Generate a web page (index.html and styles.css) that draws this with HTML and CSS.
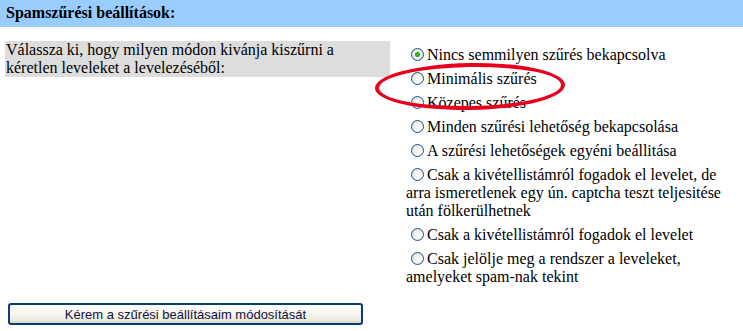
FILE: index.html
```html
<!DOCTYPE html>
<html>
<head>
    <meta charset="UTF-8">
    <title>Spamszures beallitasok</title>
    <link rel="stylesheet" href="styles.css">
</head>
<body>

    <!-- Spam filter settings -->
    <p class="section-title">Spamszűrési beállítások:</p>

    <form class="filter-form">
        <div class="settings-row">
            <p class="question">Válassza ki, hogy milyen módon kivánja kiszűrni a kéretlen leveleket a levelezéséből:</p>
            <div class="choices">
                <p class="choice"><input type="radio" name="level" value="0" checked>Nincs semmilyen szűrés bekapcsolva</p>
                <p class="choice"><input type="radio" name="level" value="1">Minimális szűrés</p>
                <p class="choice"><input type="radio" name="level" value="2">Közepes szűrés</p>
                <p class="choice"><input type="radio" name="level" value="3">Minden szűrési lehetőség bekapcsolása</p>
                <p class="choice"><input type="radio" name="level" value="4">A szűrési lehetőségek egyéni beállitása</p>
                <p class="choice"><input type="radio" name="level" value="5">Csak a kivétellistámról fogadok el levelet, de arra ismeretlenek egy ún. captcha teszt teljesitése után fölkerülhetnek</p>
                <p class="choice"><input type="radio" name="level" value="6">Csak a kivétellistámról fogadok el levelet</p>
                <p class="choice"><input type="radio" name="level" value="7">Csak jelölje meg a rendszer a leveleket, amelyeket spam-nak tekint</p>
            </div>
        </div>
        <button type="submit" class="xp-btn">Kérem a szűrési beállításaim módosítását</button>
    </form>

    <span class="highlight"></span>

</body>
</html>
```

FILE: styles.css
```css
body { margin: 0; padding: 0; background: #fff; }
p { margin: 0; }
.section-title { font-family: "Liberation Serif"; font-size: 16px; font-weight: bold; line-height: 18px; padding: 4px 6px 5px; background-color: #99ccff; color: #000; }
.settings-row { display: flex; align-items: flex-start; margin-top: 14px; }
.question { font-family: "Liberation Serif"; font-size: 16px; width: 383px; margin-left: 5px; padding: 0 1px; line-height: 18px; background-color: #dddddd; }
.choices { flex: 1; display: flex; flex-direction: column; gap: 6px; margin: 5px 5px 0 16px; }
.choice { font-family: "Liberation Serif"; font-size: 16px; }
.choice input[type="radio"] { appearance: none; -webkit-appearance: none; width: 13px; height: 13px; margin: 0 3px 0 5px; vertical-align: -1px; border: 1px solid #1c5180; border-radius: 50%; background: radial-gradient(circle at 65% 65%, #ffffff 0%, #f2f2ee 45%, #d4d2c8 100%); box-sizing: border-box; }
.choice input[type="radio"]:checked { background: radial-gradient(circle, #3fc33f 0, #21a121 2px, #e8f0e0 3px, #f2f2ee 45%, #d4d2c8 100%); }
.xp-btn { display: block; width: 355px; height: 22px; margin: 17px 0 0 8px; padding: 0; font-family: "Liberation Sans"; font-size: 13px; color: #10103a; border: 2px solid #0a3c78; border-radius: 3px; background: linear-gradient(#ffffff 0%, #f6f5ef 50%, #ebe9dd 85%, #d8d4c4 100%); }
.highlight { position: absolute; left: 375px; top: 63px; width: 190px; height: 47px; border: 4px solid #e8001c; border-radius: 50%; box-sizing: border-box; transform: rotate(-1deg); }
```
